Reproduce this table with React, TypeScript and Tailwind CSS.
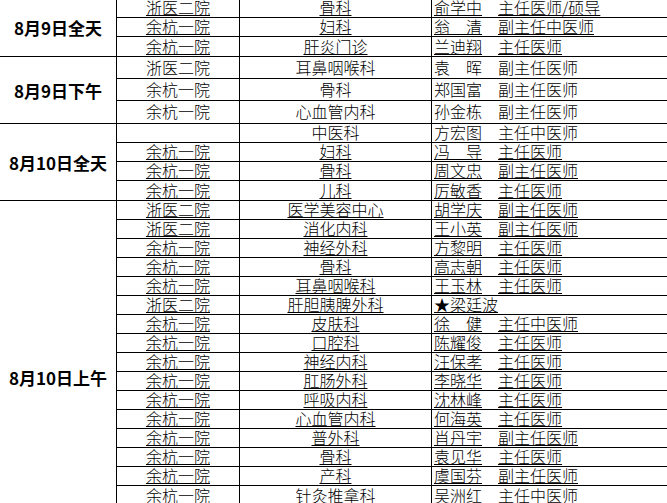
type Row = {
  hospital: string;
  dept: string;
  name: string;
  title: string;
  line?: boolean;
};

type Group = {
  label: string;
  rowH: string;
  labelClass: string;
  rows: Row[];
};

const groups: Group[] = [
  {
    label: "8月9日全天",
    rowH: "h-[19px]",
    labelClass: "items-center",
    rows: [
      { hospital: "浙医二院", dept: "骨科", name: "俞学中", title: "主任医师/硕导", line: true },
      { hospital: "余杭一院", dept: "妇科", name: "翁　清", title: "副主任中医师", line: true },
      { hospital: "余杭一院", dept: "肝炎门诊", name: "兰迪翔", title: "主任医师", line: true },
    ],
  },
  {
    label: "8月9日下午",
    rowH: "h-[22px]",
    labelClass: "items-center",
    rows: [
      { hospital: "浙医二院", dept: "耳鼻咽喉科", name: "袁　晖", title: "副主任医师" },
      { hospital: "余杭一院", dept: "骨科", name: "郑国富", title: "副主任医师" },
      { hospital: "余杭一院", dept: "心血管内科", name: "孙金栋", title: "副主任医师" },
    ],
  },
  {
    label: "8月10日全天",
    rowH: "h-[19px]",
    labelClass: "items-center",
    rows: [
      { hospital: "", dept: "中医科", name: "方宏图", title: "主任中医师" },
      { hospital: "余杭一院", dept: "妇科", name: "冯　导", title: "主任医师", line: true },
      { hospital: "余杭一院", dept: "骨科", name: "周文忠", title: "副主任医师", line: true },
      { hospital: "余杭一院", dept: "儿科", name: "厉敏香", title: "主任医师", line: true },
    ],
  },
  {
    label: "8月10日上午",
    rowH: "h-[19px]",
    labelClass: "items-start pt-[168px]",
    rows: [
      { hospital: "浙医二院", dept: "医学美容中心", name: "胡学庆", title: "副主任医师", line: true },
      { hospital: "浙医二院", dept: "消化内科", name: "王小英", title: "副主任医师", line: true },
      { hospital: "余杭一院", dept: "神经外科", name: "方黎明", title: "主任医师", line: true },
      { hospital: "余杭一院", dept: "骨科", name: "高志朝", title: "主任医师", line: true },
      { hospital: "余杭一院", dept: "耳鼻咽喉科", name: "王玉林", title: "主任医师", line: true },
      { hospital: "浙医二院", dept: "肝胆胰脾外科", name: "★梁廷波", title: "", line: true },
      { hospital: "余杭一院", dept: "皮肤科", name: "徐　健", title: "主任中医师", line: true },
      { hospital: "余杭一院", dept: "口腔科", name: "陈耀俊", title: "主任医师", line: true },
      { hospital: "余杭一院", dept: "神经内科", name: "汪保孝", title: "主任医师", line: true },
      { hospital: "余杭一院", dept: "肛肠外科", name: "李晓华", title: "主任医师", line: true },
      { hospital: "余杭一院", dept: "呼吸内科", name: "沈林峰", title: "主任医师", line: true },
      { hospital: "余杭一院", dept: "心血管内科", name: "何海英", title: "主任医师", line: true },
      { hospital: "余杭一院", dept: "普外科", name: "肖丹宇", title: "副主任医师", line: true },
      { hospital: "余杭一院", dept: "骨科", name: "袁见华", title: "主任医师", line: true },
      { hospital: "余杭一院", dept: "产科", name: "虞国芬", title: "副主任医师", line: true },
      { hospital: "余杭一院", dept: "针灸推拿科", name: "吴洲红", title: "主任中医师", line: true },
    ],
  },
];

function ScheduleRow({ row, rowH }: { row: Row; rowH: string }) {
  const u = row.line ? "underline decoration-1 underline-offset-[1px]" : "";
  return (
    <div className={`flex border-b border-black ${rowH}`}>
      <div className="flex w-[123px] shrink-0 items-center justify-center border-r border-black">
        <span className={`-mt-[1px] ${u}`}>{row.hospital}</span>
      </div>
      <div className="flex w-[192px] shrink-0 items-center justify-center border-r border-black">
        <span className={`-mt-[1px] ${u}`}>{row.dept}</span>
      </div>
      <div className="flex flex-1 items-center whitespace-nowrap pl-[2px]">
        <span className={`-mt-[1px] ${u}`}>{row.name}</span>
        {row.title ? <span className={`-mt-[1px] ml-[16px] ${u}`}>{row.title}</span> : null}
      </div>
    </div>
  );
}

export default function App() {
  return (
    <div className="h-[503px] w-[667px] overflow-hidden bg-white font-['Noto_Sans_CJK_SC','Noto_Sans',sans-serif] text-[16px] leading-[17px] font-light text-black">
      <div className="-mt-[1px]">
        {groups.map((g) => (
          <div key={g.label} className="flex border-b border-black">
            <div
              className={`flex w-[117px] shrink-0 justify-center border-r border-black text-[17px] font-bold ${g.labelClass}`}
            >
              {g.label}
            </div>
            <div className="flex flex-1 flex-col [&>div:last-child]:border-b-0">
              {g.rows.map((r, i) => (
                <ScheduleRow key={i} row={r} rowH={g.rowH} />
              ))}
            </div>
          </div>
        ))}
      </div>
    </div>
  );
}
